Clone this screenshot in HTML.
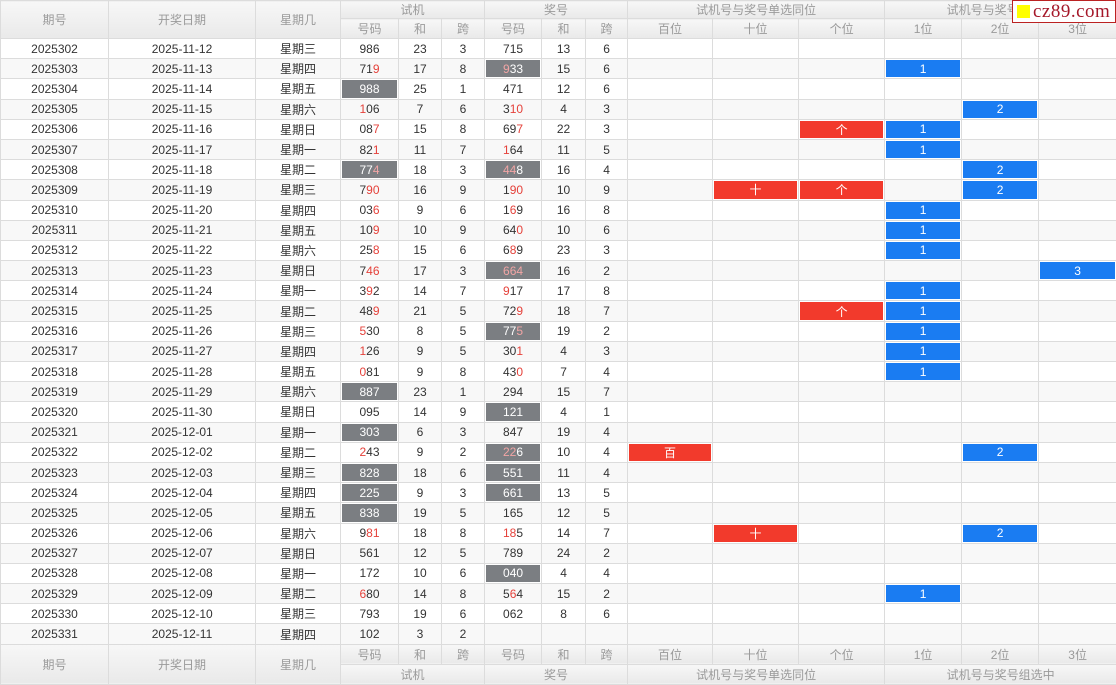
<!DOCTYPE html>
<html><head><meta charset="utf-8"><style>
body{margin:0;width:1116px;height:684px;overflow:hidden;background:#fff;font-family:"Liberation Sans","Noto Sans CJK SC",sans-serif;font-size:12px;color:#333}
table{border-collapse:collapse;table-layout:fixed;width:1116px}
td,th{border:1px solid #dcdcdc;text-align:center;padding:0;white-space:nowrap;overflow:hidden}
th{font-weight:normal;color:#9a9a9a;background:linear-gradient(#f7f7f7,#e9e9e9);font-size:12px}
.h1 th{height:17px}.h2 th{height:19px}
tbody tr{height:20.2px}
tbody tr:nth-child(even){background:#f8f8f8}
tbody td:nth-child(7),tbody td:nth-child(10),tbody td:nth-child(13){border-left:1px solid #000}
b{font-weight:normal;color:#e5413a}
.g{background:#7b7e82;color:#fff;box-shadow:inset 0 0 0 1px #fff}
.g b{color:#f2a5a5}
.bl{background:#1a7cf2;color:#fff;box-shadow:inset 0 0 0 1px #fff}
.rd{background:#f23a2c;color:#fff;box-shadow:inset 0 0 0 1px #fff}
#logo{position:absolute;left:1012px;top:0;width:102px;height:21px;background:#fff;border:1px solid #b22;display:flex;align-items:center}
#logo span{display:inline-block;width:13px;height:13px;background:#ff0;margin:0 3px 0 4px}
#logo em{font-style:normal;font-family:"Liberation Serif",serif;font-size:19px;color:#a5182a;letter-spacing:0.5px}
</style></head><body>
<table>
<colgroup><col style="width:108px"><col style="width:147px"><col style="width:85px"><col style="width:58px"><col style="width:43px"><col style="width:43px"><col style="width:57px"><col style="width:44px"><col style="width:42px"><col style="width:85px"><col style="width:86px"><col style="width:86px"><col style="width:77px"><col style="width:77px"><col style="width:78px"></colgroup>
<thead>
<tr class="h1"><th rowspan="2">期号</th><th rowspan="2">开奖日期</th><th rowspan="2">星期几</th><th colspan="3">试机</th><th colspan="3">奖号</th><th colspan="3">试机号与奖号单选同位</th><th colspan="3">试机号与奖号组选中</th></tr>
<tr class="h2"><th>号码</th><th>和</th><th>跨</th><th>号码</th><th>和</th><th>跨</th><th>百位</th><th>十位</th><th>个位</th><th>1位</th><th>2位</th><th>3位</th></tr>
</thead>
<tbody>
<tr><td>2025302</td><td>2025-11-12</td><td>星期三</td><td>986</td><td>23</td><td>3</td><td>715</td><td>13</td><td>6</td><td></td><td></td><td></td><td></td><td></td><td></td></tr>
<tr><td>2025303</td><td>2025-11-13</td><td>星期四</td><td>71<b>9</b></td><td>17</td><td>8</td><td class="g"><b>9</b>33</td><td>15</td><td>6</td><td></td><td></td><td></td><td class="bl">1</td><td></td><td></td></tr>
<tr><td>2025304</td><td>2025-11-14</td><td>星期五</td><td class="g">988</td><td>25</td><td>1</td><td>471</td><td>12</td><td>6</td><td></td><td></td><td></td><td></td><td></td><td></td></tr>
<tr><td>2025305</td><td>2025-11-15</td><td>星期六</td><td><b>1</b>06</td><td>7</td><td>6</td><td>3<b>10</b></td><td>4</td><td>3</td><td></td><td></td><td></td><td></td><td class="bl">2</td><td></td></tr>
<tr><td>2025306</td><td>2025-11-16</td><td>星期日</td><td>08<b>7</b></td><td>15</td><td>8</td><td>69<b>7</b></td><td>22</td><td>3</td><td></td><td></td><td class="rd">个</td><td class="bl">1</td><td></td><td></td></tr>
<tr><td>2025307</td><td>2025-11-17</td><td>星期一</td><td>82<b>1</b></td><td>11</td><td>7</td><td><b>1</b>64</td><td>11</td><td>5</td><td></td><td></td><td></td><td class="bl">1</td><td></td><td></td></tr>
<tr><td>2025308</td><td>2025-11-18</td><td>星期二</td><td class="g">77<b>4</b></td><td>18</td><td>3</td><td class="g"><b>44</b>8</td><td>16</td><td>4</td><td></td><td></td><td></td><td></td><td class="bl">2</td><td></td></tr>
<tr><td>2025309</td><td>2025-11-19</td><td>星期三</td><td>7<b>90</b></td><td>16</td><td>9</td><td>1<b>90</b></td><td>10</td><td>9</td><td></td><td class="rd">十</td><td class="rd">个</td><td></td><td class="bl">2</td><td></td></tr>
<tr><td>2025310</td><td>2025-11-20</td><td>星期四</td><td>03<b>6</b></td><td>9</td><td>6</td><td>1<b>6</b>9</td><td>16</td><td>8</td><td></td><td></td><td></td><td class="bl">1</td><td></td><td></td></tr>
<tr><td>2025311</td><td>2025-11-21</td><td>星期五</td><td>10<b>9</b></td><td>10</td><td>9</td><td>64<b>0</b></td><td>10</td><td>6</td><td></td><td></td><td></td><td class="bl">1</td><td></td><td></td></tr>
<tr><td>2025312</td><td>2025-11-22</td><td>星期六</td><td>25<b>8</b></td><td>15</td><td>6</td><td>6<b>8</b>9</td><td>23</td><td>3</td><td></td><td></td><td></td><td class="bl">1</td><td></td><td></td></tr>
<tr><td>2025313</td><td>2025-11-23</td><td>星期日</td><td>7<b>46</b></td><td>17</td><td>3</td><td class="g"><b>664</b></td><td>16</td><td>2</td><td></td><td></td><td></td><td></td><td></td><td class="bl">3</td></tr>
<tr><td>2025314</td><td>2025-11-24</td><td>星期一</td><td>3<b>9</b>2</td><td>14</td><td>7</td><td><b>9</b>17</td><td>17</td><td>8</td><td></td><td></td><td></td><td class="bl">1</td><td></td><td></td></tr>
<tr><td>2025315</td><td>2025-11-25</td><td>星期二</td><td>48<b>9</b></td><td>21</td><td>5</td><td>72<b>9</b></td><td>18</td><td>7</td><td></td><td></td><td class="rd">个</td><td class="bl">1</td><td></td><td></td></tr>
<tr><td>2025316</td><td>2025-11-26</td><td>星期三</td><td><b>5</b>30</td><td>8</td><td>5</td><td class="g">77<b>5</b></td><td>19</td><td>2</td><td></td><td></td><td></td><td class="bl">1</td><td></td><td></td></tr>
<tr><td>2025317</td><td>2025-11-27</td><td>星期四</td><td><b>1</b>26</td><td>9</td><td>5</td><td>30<b>1</b></td><td>4</td><td>3</td><td></td><td></td><td></td><td class="bl">1</td><td></td><td></td></tr>
<tr><td>2025318</td><td>2025-11-28</td><td>星期五</td><td><b>0</b>81</td><td>9</td><td>8</td><td>43<b>0</b></td><td>7</td><td>4</td><td></td><td></td><td></td><td class="bl">1</td><td></td><td></td></tr>
<tr><td>2025319</td><td>2025-11-29</td><td>星期六</td><td class="g">887</td><td>23</td><td>1</td><td>294</td><td>15</td><td>7</td><td></td><td></td><td></td><td></td><td></td><td></td></tr>
<tr><td>2025320</td><td>2025-11-30</td><td>星期日</td><td>095</td><td>14</td><td>9</td><td class="g">121</td><td>4</td><td>1</td><td></td><td></td><td></td><td></td><td></td><td></td></tr>
<tr><td>2025321</td><td>2025-12-01</td><td>星期一</td><td class="g">303</td><td>6</td><td>3</td><td>847</td><td>19</td><td>4</td><td></td><td></td><td></td><td></td><td></td><td></td></tr>
<tr><td>2025322</td><td>2025-12-02</td><td>星期二</td><td><b>2</b>43</td><td>9</td><td>2</td><td class="g"><b>22</b>6</td><td>10</td><td>4</td><td class="rd">百</td><td></td><td></td><td></td><td class="bl">2</td><td></td></tr>
<tr><td>2025323</td><td>2025-12-03</td><td>星期三</td><td class="g">828</td><td>18</td><td>6</td><td class="g">551</td><td>11</td><td>4</td><td></td><td></td><td></td><td></td><td></td><td></td></tr>
<tr><td>2025324</td><td>2025-12-04</td><td>星期四</td><td class="g">225</td><td>9</td><td>3</td><td class="g">661</td><td>13</td><td>5</td><td></td><td></td><td></td><td></td><td></td><td></td></tr>
<tr><td>2025325</td><td>2025-12-05</td><td>星期五</td><td class="g">838</td><td>19</td><td>5</td><td>165</td><td>12</td><td>5</td><td></td><td></td><td></td><td></td><td></td><td></td></tr>
<tr><td>2025326</td><td>2025-12-06</td><td>星期六</td><td>9<b>81</b></td><td>18</td><td>8</td><td><b>18</b>5</td><td>14</td><td>7</td><td></td><td class="rd">十</td><td></td><td></td><td class="bl">2</td><td></td></tr>
<tr><td>2025327</td><td>2025-12-07</td><td>星期日</td><td>561</td><td>12</td><td>5</td><td>789</td><td>24</td><td>2</td><td></td><td></td><td></td><td></td><td></td><td></td></tr>
<tr><td>2025328</td><td>2025-12-08</td><td>星期一</td><td>172</td><td>10</td><td>6</td><td class="g">040</td><td>4</td><td>4</td><td></td><td></td><td></td><td></td><td></td><td></td></tr>
<tr><td>2025329</td><td>2025-12-09</td><td>星期二</td><td><b>6</b>80</td><td>14</td><td>8</td><td>5<b>6</b>4</td><td>15</td><td>2</td><td></td><td></td><td></td><td class="bl">1</td><td></td><td></td></tr>
<tr><td>2025330</td><td>2025-12-10</td><td>星期三</td><td>793</td><td>19</td><td>6</td><td>062</td><td>8</td><td>6</td><td></td><td></td><td></td><td></td><td></td><td></td></tr>
<tr><td>2025331</td><td>2025-12-11</td><td>星期四</td><td>102</td><td>3</td><td>2</td><td></td><td></td><td></td><td></td><td></td><td></td><td></td><td></td><td></td></tr>
</tbody>
<tfoot>
<tr class="h2"><th rowspan="2">期号</th><th rowspan="2">开奖日期</th><th rowspan="2">星期几</th><th>号码</th><th>和</th><th>跨</th><th>号码</th><th>和</th><th>跨</th><th>百位</th><th>十位</th><th>个位</th><th>1位</th><th>2位</th><th>3位</th></tr>
<tr class="h2"><th colspan="3">试机</th><th colspan="3">奖号</th><th colspan="3">试机号与奖号单选同位</th><th colspan="3">试机号与奖号组选中</th></tr>
</tfoot>
</table>
<div id="logo"><span></span><em>cz89.com</em></div>
</body></html>
